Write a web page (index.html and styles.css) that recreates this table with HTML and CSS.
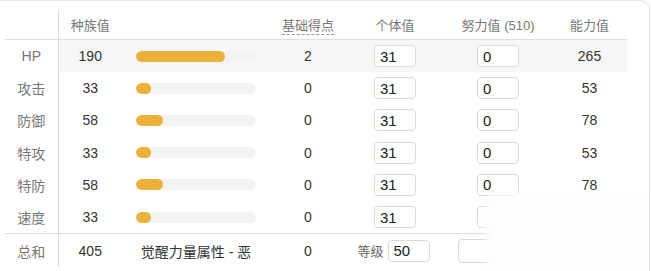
FILE: index.html
```html
<!DOCTYPE html>
<html lang="zh">
<head>
<meta charset="utf-8">
<link rel="stylesheet" href="styles.css">
</head>
<body>
<div class="card">
  <table class="stats">
    <colgroup>
      <col class="c-label"><col class="c-base"><col class="c-bar"><col class="c-ev"><col class="c-iv"><col class="c-effort"><col class="c-final">
    </colgroup>
    <thead>
      <tr>
        <th class="label"></th>
        <th>种族值</th>
        <th></th>
        <th><span class="dashed">基础得点</span></th>
        <th>个体值</th>
        <th>努力值 (510)</th>
        <th>能力值</th>
      </tr>
    </thead>
    <tbody>
      <tr class="hl">
        <td class="label">HP</td><td>190</td>
        <td class="barcell"><div class="track"><div class="fill" style="width:74.5%"></div></div></td>
        <td>2</td><td><input class="box" value="31"></td><td><input class="box" value="0"></td><td>265</td>
      </tr>
      <tr>
        <td class="label">攻击</td><td>33</td>
        <td class="barcell"><div class="track"><div class="fill" style="width:12.9%"></div></div></td>
        <td>0</td><td><input class="box" value="31"></td><td><input class="box" value="0"></td><td>53</td>
      </tr>
      <tr>
        <td class="label">防御</td><td>58</td>
        <td class="barcell"><div class="track"><div class="fill" style="width:22.7%"></div></div></td>
        <td>0</td><td><input class="box" value="31"></td><td><input class="box" value="0"></td><td>78</td>
      </tr>
      <tr>
        <td class="label">特攻</td><td>33</td>
        <td class="barcell"><div class="track"><div class="fill" style="width:12.9%"></div></div></td>
        <td>0</td><td><input class="box" value="31"></td><td><input class="box" value="0"></td><td>53</td>
      </tr>
      <tr>
        <td class="label">特防</td><td>58</td>
        <td class="barcell"><div class="track"><div class="fill" style="width:22.7%"></div></div></td>
        <td>0</td><td><input class="box" value="31"></td><td><input class="box" value="0"></td><td>78</td>
      </tr>
      <tr>
        <td class="label">速度</td><td>33</td>
        <td class="barcell"><div class="track"><div class="fill" style="width:12.9%"></div></div></td>
        <td>0</td><td><input class="box" value="31"></td><td><input class="box" value=""></td><td>53</td>
      </tr>
    </tbody>
    <tfoot>
      <tr>
        <td class="label">总和</td><td>405</td>
        <td class="hidden-power">觉醒力量属性 - 恶</td>
        <td>0</td>
        <td><span class="level">等级 <input class="box" value="50"></span></td>
        <td><input class="box wide" value=""></td>
        <td></td>
      </tr>
    </tfoot>
  </table>
  <div class="veil"></div>
</div>
</body>
</html>
```
FILE: styles.css
```css
html, body {
  margin: 0;
  padding: 0;
  background: #ffffff;
}
body {
  width: 651px;
  height: 271px;
  overflow: hidden;
  font-family: "Liberation Sans", "Noto Sans CJK SC", sans-serif;
  color: #333;
}
.card {
  position: relative;
  width: 650px;
  height: 271px;
  box-sizing: border-box;
  border-top: 1px solid #e6e6e9;
  border-right: 1px solid #e6e6e9;
  border-top-right-radius: 10px;
  padding: 9px 0 0 5px;
  overflow: hidden;
}
.stats {
  border-collapse: collapse;
  table-layout: fixed;
  width: 622px;
}
.c-label { width: 53px; }
.c-base { width: 64px; }
.c-bar { width: 148px; }
.c-ev { width: 76px; }
.c-iv { width: 98px; }
.c-effort { width: 108px; }
.c-final { width: 75px; }

.stats th {
  height: 28px;
  padding: 0 0 1px;
  font-weight: normal;
  font-size: 13px;
  color: #777;
  text-align: center;
  border-bottom: 1px solid #dedee2;
}
.stats th.label,
.stats td.label {
  border-right: 1px solid #dcdcdf;
}
.dashed {
  border-bottom: 1px dashed #999;
  padding-bottom: 1px;
}
.stats td {
  height: 32.2px;
  padding: 0;
  font-size: 14px;
  text-align: center;
  color: #333;
}
.stats td.label {
  color: #777;
  background: #fff;
}
.stats tr.hl td {
  background: #f6f6f8;
}
.stats tr.hl td.label {
  background: #fff;
}
.barcell {
  text-align: left !important;
}
.track {
  margin-left: 14px;
  width: 120px;
  height: 11px;
  border-radius: 6px;
  background: #f3f3f5;
  overflow: hidden;
}
.fill {
  height: 100%;
  border-radius: 6px;
  background: #ecb13b;
}
.box {
  box-sizing: border-box;
  width: 42px;
  height: 22px;
  border: 1px solid #d9d9dc;
  border-radius: 4px;
  padding: 0 5px;
  font-family: "Liberation Sans", sans-serif;
  font-size: 15px;
  color: #222;
  background: #fff;
  outline: none;
  vertical-align: middle;
}
.box.wide {
  width: 80px;
  height: 24px;
}
.stats tfoot td {
  height: 33px;
  border-top: 1px solid #dcdcdf;
  vertical-align: middle;
}
.stats tfoot td:last-child {
  border-top: none;
}
.hidden-power {
  font-size: 14px;
  color: #333;
}
.level {
  display: inline-flex;
  align-items: center;
  gap: 4px;
  font-size: 13px;
  color: #666;
  margin-left: -3px;
}
.veil {
  position: absolute;
  left: 492px;
  top: 198px;
  width: 160px;
  height: 80px;
  background: #fdfdff;
  box-shadow: 0 0 6px 5px #fdfdff;
}
```
